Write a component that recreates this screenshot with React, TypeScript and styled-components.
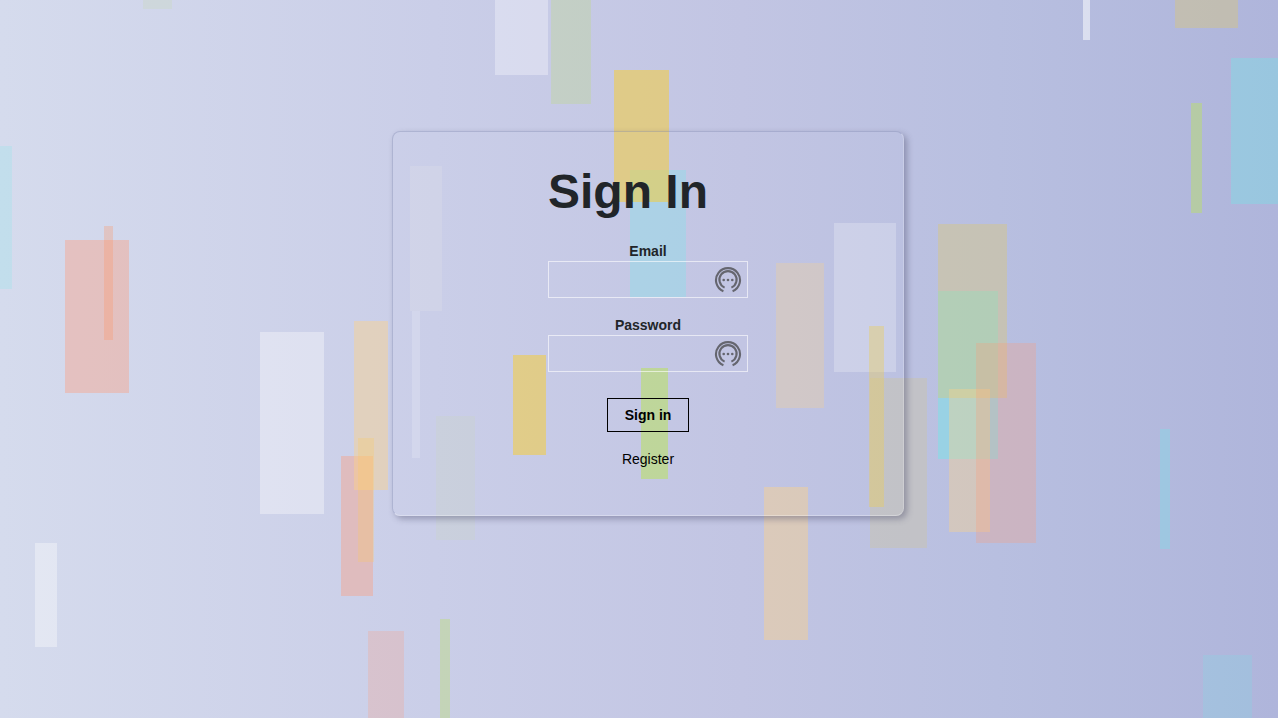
import React from "react";
import styled, { createGlobalStyle } from "styled-components";

const GlobalStyle = createGlobalStyle`
  *, *::before, *::after { box-sizing: border-box; }
  body {
    margin: 0;
    font-family: "Liberation Sans", Arial, sans-serif;
    font-size: 14px;
    line-height: 20px;
    color: #212529;
  }
`;

const Page = styled.main`
  position: relative;
  isolation: isolate;
  overflow: hidden;
  display: flex;
  justify-content: center;
  align-items: flex-start;
  min-height: 100vh;
  padding: 131px 0 48px 18px;
  background: linear-gradient(to right, #d5dbed, #cacee8 34%, #c2c5e3 58%, #b8bfe0 78%, #afb5db);
`;

const Backdrop = styled.svg`
  position: absolute;
  inset: 0;
  z-index: -1;
  width: 100%;
  height: 100%;
`;

const Card = styled.section`
  display: flex;
  justify-content: center;
  width: 41%;
  min-width: 280px;
  max-width: 512px;
  padding: 31px 24px 46px;
  border: 1px solid;
  border-color: rgba(120, 130, 170, 0.35) rgba(255, 255, 255, 0.2) rgba(255, 255, 255, 0.3) rgba(120, 130, 170, 0.35);
  border-radius: 8px;
  box-shadow: 3px 3px 6px rgba(70, 70, 100, 0.4);
`;

const Form = styled.form`
  display: flex;
  flex-direction: column;
  align-items: center;
  width: 200px;
`;

const Title = styled.h1`
  align-self: flex-start;
  margin: 0 0 20px;
  font-size: 48px;
  line-height: 58px;
  font-weight: 700;
  white-space: nowrap;
`;

const Field = styled.div`
  display: flex;
  flex-direction: column;
  width: 100%;
  margin-bottom: 17px;
`;

const Label = styled.label`
  text-align: center;
  font-weight: 700;
`;

const InputFrame = styled.div`
  display: flex;
  align-items: center;
  height: 37px;
  padding-right: 5px;
  border: 1px solid rgba(255, 255, 255, 0.6);
`;

const Input = styled.input`
  flex: 1;
  min-width: 0;
  height: 100%;
  padding: 0 8px;
  border: 0;
  outline: 0;
  background: transparent;
  font: inherit;
  color: inherit;
`;

const SubmitButton = styled.button`
  margin: 9px 0 17px;
  padding: 6px 17px;
  border: 1px solid #000;
  background: transparent;
  font: inherit;
  font-weight: 700;
  color: #000;
  cursor: pointer;
`;

const RegisterLink = styled.a`
  color: #000;
  text-decoration: none;
`;

const KeyIcon = styled.svg`
  flex: none;
  width: 28px;
  height: 28px;
`;

type Bar = [x: number, y: number, width: number, height: number, fill: string, opacity: number];

const WHITE = "#ffffff";
const SALMON = "#ff9a78";
const AMBER = "#ffd282";
const GOLD = "#f9cd2c";
const SAND = "#dcc86e";
const LIME = "#badf69";
const CYAN = "#64f0ea";

const bars: Bar[] = [
  [0, 146, 12, 143, CYAN, 0.17],
  [143, 0, 29, 9, LIME, 0.12],
  [65, 240, 64, 153, SALMON, 0.38],
  [104, 226, 9, 114, "#ff9664", 0.3],
  [35, 543, 22, 104, WHITE, 0.35],
  [260, 332, 64, 182, WHITE, 0.35],
  [341, 456, 32, 140, SALMON, 0.38],
  [354, 321, 34, 169, AMBER, 0.42],
  [358, 438, 16, 124, "#ffc85a", 0.26],
  [368, 631, 36, 87, SALMON, 0.24],
  [440, 619, 10, 99, LIME, 0.38],
  [410, 166, 32, 145, "#eef0e8", 0.18],
  [412, 311, 8, 147, WHITE, 0.17],
  [436, 416, 39, 124, "#cade9a", 0.14],
  [495, 0, 53, 75, WHITE, 0.32],
  [551, 0, 40, 104, LIME, 0.25],
  [630, 170, 56, 127, CYAN, 0.25],
  [614, 70, 55, 132, GOLD, 0.5],
  [641, 368, 27, 111, LIME, 0.6],
  [513, 355, 33, 100, GOLD, 0.5],
  [776, 263, 48, 145, AMBER, 0.27],
  [764, 487, 44, 153, AMBER, 0.42],
  [834, 223, 62, 149, WHITE, 0.23],
  [870, 378, 57, 170, SAND, 0.22],
  [869, 326, 15, 181, "#ebcd5a", 0.4],
  [938, 291, 60, 168, CYAN, 0.38],
  [938, 224, 69, 174, SAND, 0.38],
  [949, 389, 41, 143, AMBER, 0.36],
  [976, 343, 60, 200, SALMON, 0.28],
  [1083, 0, 7, 40, WHITE, 0.52],
  [1175, 0, 63, 28, SAND, 0.38],
  [1191, 103, 11, 110, LIME, 0.48],
  [1231, 58, 47, 146, CYAN, 0.29],
  [1160, 429, 10, 120, CYAN, 0.26],
  [1203, 655, 49, 63, CYAN, 0.16],
];

function FallingBars() {
  return (
    <Backdrop viewBox="0 0 1278 718" preserveAspectRatio="xMidYMid slice" aria-hidden="true">
      {bars.map(([x, y, width, height, fill, opacity]) => (
        <rect key={`${x}-${y}`} x={x} y={y} width={width} height={height} fill={fill} fillOpacity={opacity} />
      ))}
    </Backdrop>
  );
}

function PasswordManagerIcon() {
  return (
    <KeyIcon viewBox="0 0 28 28" fill="none" stroke="#65666f" aria-hidden="true">
      <path d="M9.4 25.2A12 12 0 1 1 18.6 25.2" strokeWidth="2.1" />
      <path d="M10.6 21.6A8.6 8.6 0 1 1 17.4 21.6" strokeWidth="2.1" />
      <g fill="#65666f" stroke="none">
        <circle cx="9.7" cy="14" r="1.3" />
        <circle cx="14" cy="14" r="1.3" />
        <circle cx="18.3" cy="14" r="1.3" />
      </g>
    </KeyIcon>
  );
}

function TextField({ id, label, type }: { id: string; label: string; type: string }) {
  return (
    <Field>
      <Label htmlFor={id}>{label}</Label>
      <InputFrame>
        <Input id={id} name={id} type={type} />
        <PasswordManagerIcon />
      </InputFrame>
    </Field>
  );
}

export default function App() {
  return (
    <>
      <GlobalStyle />
      <Page>
        <FallingBars />
        <Card>
          <Form onSubmit={(event) => event.preventDefault()}>
            <Title>Sign In</Title>
            <TextField id="email" label="Email" type="email" />
            <TextField id="password" label="Password" type="password" />
            <SubmitButton type="submit">Sign in</SubmitButton>
            <RegisterLink href="#register">Register</RegisterLink>
          </Form>
        </Card>
      </Page>
    </>
  );
}
